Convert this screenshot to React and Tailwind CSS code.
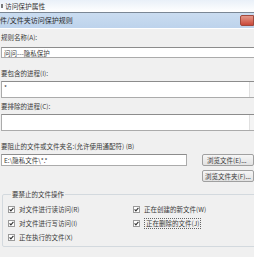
const font = { fontFamily: '"Noto Sans CJK SC", "Noto Sans", sans-serif' };

function Check() {
  return (
    <svg width="7" height="7" viewBox="0 0 7 7" className="shrink-0">
      <rect x="0.5" y="0.5" width="6" height="6" fill="#fff" stroke="#9a9a9a" />
      <path d="M1.6 3.4 L2.9 4.8 L5.4 1.8" fill="none" stroke="#333" strokeWidth="1.1" />
    </svg>
  );
}

function Option({ label, focus }) {
  return (
    <div className="flex items-center gap-[4px] h-[14px]">
      <Check />
      <span
        className={`leading-[9px] text-[6.5px] text-[#3a3a3a] ${
          focus ? "border border-dotted border-[#666] px-[1px]" : ""
        }`}
      >
        {label}
      </span>
    </div>
  );
}

export default function App() {
  return (
    <div className="w-[254px] h-[257px] overflow-hidden bg-[#f0f0f0] flex flex-col" style={font}>
      {/* parent window strip */}
      <div className="h-[12px] bg-gradient-to-b from-[#e9f0f8] to-white flex items-center gap-[2px] pl-[1px]">
        <span className="w-[2px] h-[4px] bg-[#7a7a7a]"></span>
        <span className="text-[6.7px] leading-[8px] text-[#333]">访问保护属性</span>
      </div>

      {/* dialog title bar */}
      <div className="h-[16px] border-t border-[#7a8694] bg-gradient-to-b from-[#cadcf0] to-[#bdd3ec] flex items-center justify-between">
        <span className="text-[7px] leading-[9px] text-[#2a2a2a]">件/文件夹访问保护规则</span>
        <span className="w-[14px] h-[11px] rounded-l-[2px] bg-gradient-to-b from-[#e3978a] to-[#c9483a] border border-[#a04a3e]"></span>
      </div>
      <div className="h-px bg-white"></div>

      {/* body */}
      <div className="flex flex-col pl-[1px] text-[6.5px] text-[#3a3a3a]">
        <div className="mt-[4px] leading-[8px]">规则名称(A):</div>
        <div className="mt-[6px] h-[11px] w-[262px] bg-white border border-[#ababab] border-t-[#8c8c8c] flex items-center pl-[2px] leading-[8px]">
          问问---隐私保护
        </div>

        <div className="mt-[11px] leading-[8px]">要包含的进程(I):</div>
        <div className="mt-[4px] h-[17px] w-[262px] bg-white border border-[#ababab] border-t-[#8c8c8c] flex">
          <span className="flex-1 pl-[2px] pt-[1px] leading-[8px]">*</span>
          <span className="w-[13px] bg-[#f4f4f4] border-l border-[#e0e0e0]"></span>
        </div>

        <div className="mt-[4px] leading-[8px]">要排除的进程(C):</div>
        <div className="mt-[4px] h-[17px] w-[262px] bg-white border border-[#ababab] border-t-[#8c8c8c] flex">
          <span className="flex-1"></span>
          <span className="w-[13px] bg-[#f4f4f4] border-l border-[#e0e0e0]"></span>
        </div>

        <div className="mt-[11px] leading-[8px]">要阻止的文件或文件夹名:(允许使用通配符) (B)</div>
        <div className="mt-[4px] flex gap-[15px]">
          <div className="w-[191px] h-[12px] bg-white border border-[#ababab] border-t-[#8c8c8c] flex items-center pl-[2px] leading-[8px]">
            E:\隐私文件\*.*
          </div>
          <div className="flex flex-col gap-[4px]">
            <div className="w-[52px] h-[12px] border border-[#a0a0a0] rounded-[2px] bg-gradient-to-b from-[#f6f6f6] to-[#e2e2e2] flex items-center pl-[4px] leading-[8px] whitespace-nowrap">
              浏览文件(E)...
            </div>
            <div className="w-[52px] h-[12px] border border-[#a0a0a0] rounded-[2px] bg-gradient-to-b from-[#f6f6f6] to-[#e2e2e2] flex items-center pl-[2px] leading-[8px] whitespace-nowrap">
              浏览文件夹(F)...
            </div>
          </div>
        </div>

        <fieldset className="mt-[8px] ml-[1px] w-[262px] h-[57px] border border-[#d3d9de] rounded-[2px] pl-[5px] pt-[4px]">
          <legend className="ml-[3px] px-[1px] leading-[8px]">要禁止的文件操作</legend>
          <div className="grid grid-cols-[125px_1fr]">
            <Option label="对文件进行读访问(R)" />
            <Option label="正在创建的新文件(W)" />
            <Option label="对文件进行写访问(I)" />
            <Option label="正在删除的文件(J)" focus />
            <Option label="正在执行的文件(X)" />
          </div>
        </fieldset>
      </div>
    </div>
  );
}
